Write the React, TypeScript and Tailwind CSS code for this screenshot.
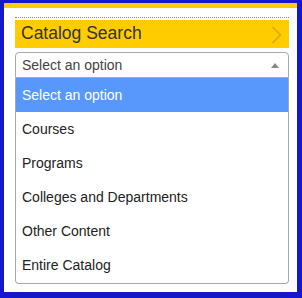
import React from "react";

const options = [
  "Select an option",
  "Courses",
  "Programs",
  "Colleges and Departments",
  "Other Content",
  "Entire Catalog",
];

export default function App() {
  return (
    <div
      className="w-[302px] h-[298px] bg-[#1616cc] pt-[3px] pl-[4px] pr-[5px] pb-[6px]"
      style={{ fontFamily: '"Liberation Sans", Arial, sans-serif' }}
    >
      <div className="h-full bg-white flex flex-col">
        <div className="h-[5px] bg-[#ffcc00] shrink-0" />
        <div className="pl-[11px] pr-[8px] pt-[9px] flex flex-col">
          <div className="border-t border-dotted border-[#8a8a8a] h-0" />
          <div className="mt-[2px] h-[28px] bg-[#ffcc00] flex items-center justify-between pl-[6px] pr-[7px]">
            <span className="text-[17.5px] leading-none text-[#333]">Catalog Search</span>
            <svg width="11" height="18" viewBox="0 0 11 18" className="mt-[1px]">
              <polyline
                points="1.5,1 9.5,9 1.5,17"
                fill="none"
                stroke="#dcaa00"
                strokeWidth="1.6"
              />
            </svg>
          </div>
          <div className="mt-[4px] h-[26px] border border-[#aaa] rounded-t-[4px] flex items-center justify-between pl-[6px] pr-[9px]">
            <span className="text-[14px] leading-none text-[#444]">Select an option</span>
            <svg width="8" height="5" viewBox="0 0 8 5">
              <polygon points="0,5 8,5 4,0" fill="#888" />
            </svg>
          </div>
          <div className="border border-t-0 border-[#aaa] rounded-b-[4px] pb-[1px]">
            {options.map((o, i) => (
              <div
                key={o}
                className={
                  i === 0
                    ? "h-[34px] flex items-center pl-[6px] text-[14px] bg-[#5897fb] text-white"
                    : "h-[34px] flex items-center pl-[6px] text-[14px] text-[#222]"
                }
              >
                {o}
              </div>
            ))}
          </div>
        </div>
      </div>
    </div>
  );
}
